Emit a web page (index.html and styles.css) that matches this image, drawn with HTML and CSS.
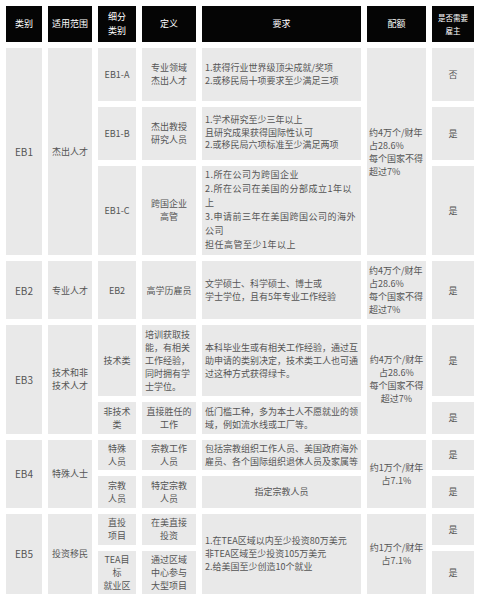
FILE: index.html
```html
<!DOCTYPE html>
<html lang="zh-CN">
<head>
<meta charset="utf-8">
<title>EB 移民类别</title>
<link rel="stylesheet" href="styles.css">
</head>
<body>
<table class="visa">
  <colgroup>
    <col class="c-cat"><col class="c-scope"><col class="c-sub"><col class="c-def"><col class="c-req"><col class="c-quota"><col class="c-emp">
  </colgroup>
  <thead>
    <tr class="r-head">
      <th>类别</th>
      <th>适用范围</th>
      <th>细分<br>类别</th>
      <th>定义</th>
      <th>要求</th>
      <th>配额</th>
      <th class="small">是否需要<br>雇主</th>
    </tr>
  </thead>
  <tbody>
    <tr class="r1">
      <td rowspan="3" class="cat">EB1</td>
      <td rowspan="3">杰出人才</td>
      <td>EB1-A</td>
      <td>专业领域<br>杰出人才</td>
      <td class="req">1.获得行业世界级顶尖成就/奖项<br>2.或移民局十项要求至少满足三项</td>
      <td rowspan="3" class="quota-left">约4万个/财年<br>占28.6%<br>每个国家不得<br>超过7%</td>
      <td>否</td>
    </tr>
    <tr class="r2">
      <td>EB1-B</td>
      <td>杰出教授<br>研究人员</td>
      <td class="req tight">1.学术研究至少三年以上<br>且研究成果获得国际性认可<br>2.或移民局六项标准至少满足两项</td>
      <td>是</td>
    </tr>
    <tr class="r3">
      <td>EB1-C</td>
      <td>跨国企业<br>高管</td>
      <td class="req wide">1.所在公司为跨国企业<br>2.所在公司在美国的分部成立1年以<br>上<br>3.申请前三年在美国跨国公司的海外<br>公司<br>担任高管至少1年以上</td>
      <td>是</td>
    </tr>
    <tr class="r4">
      <td class="cat">EB2</td>
      <td>专业人才</td>
      <td>EB2</td>
      <td>高学历雇员</td>
      <td class="req">文学硕士、科学硕士、博士或<br>学士学位，且有5年专业工作经验</td>
      <td class="quota-left">约4万个/财年<br>占28.6%<br>每个国家不得<br>超过7%</td>
      <td>是</td>
    </tr>
    <tr class="r5">
      <td rowspan="2" class="cat">EB3</td>
      <td rowspan="2">技术和非<br>技术人才</td>
      <td>技术类</td>
      <td class="left">培训获取技<br>能，有相关<br>工作经验，<br>同时拥有学<br>士学位。</td>
      <td class="req">本科毕业生或有相关工作经验，通过互<br>助申请的类别决定，技术类工人也可通<br>过这种方式获得绿卡。</td>
      <td rowspan="2">约4万个/财年<br>占28.6%<br>每个国家不得<br>超过7%</td>
      <td>是</td>
    </tr>
    <tr class="r6">
      <td>非技术<br>类</td>
      <td>直接胜任的<br>工作</td>
      <td class="req">低门槛工种，多为本土人不愿就业的领<br>域，例如流水线或工厂等。</td>
      <td>是</td>
    </tr>
    <tr class="r7">
      <td rowspan="2" class="cat">EB4</td>
      <td rowspan="2">特殊人士</td>
      <td>特殊<br>人员</td>
      <td>宗教工作<br>人员</td>
      <td class="req">包括宗教组织工作人员、美国政府海外<br>雇员、各个国际组织退休人员及家属等</td>
      <td rowspan="2">约1万个/财年<br>占7.1%</td>
      <td>是</td>
    </tr>
    <tr class="r8">
      <td>宗教<br>人员</td>
      <td>特定宗教<br>人员</td>
      <td>指定宗教人员</td>
      <td>是</td>
    </tr>
    <tr class="r9">
      <td rowspan="2" class="cat">EB5</td>
      <td rowspan="2">投资移民</td>
      <td>直投<br>项目</td>
      <td>在美直接<br>投资</td>
      <td rowspan="2" class="req">1.在TEA区域以内至少投资80万美元<br>非TEA区域至少投资105万美元<br>2.给美国至少创造10个就业</td>
      <td rowspan="2">约1万个/财年<br>占7.1%</td>
      <td>是</td>
    </tr>
    <tr class="r10">
      <td>TEA目<br>标<br>就业区</td>
      <td>通过区域<br>中心参与<br>大型项目</td>
      <td>是</td>
    </tr>
  </tbody>
</table>
</body>
</html>
```
FILE: styles.css
```css
html, body {
  margin: 0;
  padding: 0;
  background: #ffffff;
  overflow: hidden;
}

body {
  font-family: "Noto Sans CJK SC", "Noto Sans", sans-serif;
  color: #555555;
}

.visa {
  border-collapse: separate;
  border-spacing: 6px 6.5px;
  table-layout: fixed;
  width: 480px;
  font-size: 9px;
  line-height: 13px;
}

.c-cat { width: 36px; }
.c-scope { width: 44px; }
.c-sub { width: 38px; }
.c-def { width: 54px; }
.c-req { width: 159px; }
.c-quota { width: 59px; }
.c-emp { width: 42px; }

.visa th {
  background: #050505;
  color: #ffffff;
  font-weight: normal;
  font-size: 9px;
  line-height: 14px;
  padding: 0;
  text-align: center;
  vertical-align: middle;
}

.visa th.small {
  font-size: 7.5px;
  line-height: 13px;
}

.visa td {
  background: #e9e9e9;
  padding: 0 2px;
  text-align: center;
  vertical-align: middle;
  overflow: hidden;
}

.visa td.cat {
  font-size: 10px;
}

.visa td.req {
  text-align: left;
  padding: 0 3px;
}

.visa td.req.tight {
  line-height: 12.5px;
}

.visa td.req.wide {
  line-height: 14px;
  letter-spacing: 0.5px;
}

.visa td.left {
  text-align: left;
  padding: 0 3px;
}

.visa td.quota-left {
  text-align: left;
}

.r-head { height: 36px; }
.r1 { height: 52.5px; }
.r2 { height: 53px; }
.r3 { height: 89.5px; }
.r4 { height: 58px; }
.r5 { height: 71px; }
.r6 { height: 31.5px; }
.r7 { height: 30.5px; }
.r8 { height: 31.5px; }
.r9 { height: 31.5px; }
.r10 { height: 43px; }
```
